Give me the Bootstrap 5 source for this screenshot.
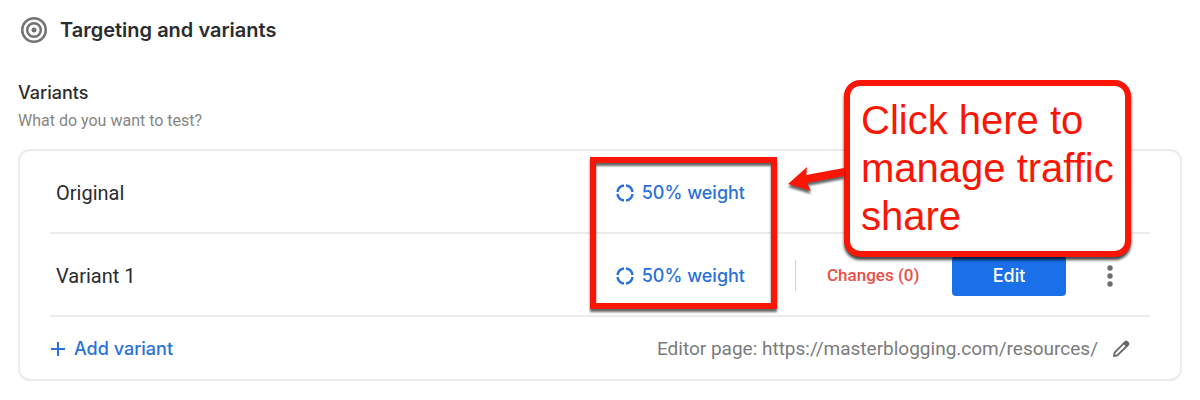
<!DOCTYPE html>
<html lang="en">
<head>
<meta charset="utf-8">
<meta name="viewport" content="width=device-width, initial-scale=1">
<title>Targeting and variants</title>
<link href="https://cdn.jsdelivr.net/npm/bootstrap@5.3.0/dist/css/bootstrap.min.css" rel="stylesheet">
<style>
  body { font-family: Roboto, "Liberation Sans", sans-serif; color: #2b2c2f; background: #fff; }
  .page { padding: 14px 18px 20px; }
  .product { font-family: Inter, "Open Sans", sans-serif; font-weight: 500; }
  .page-title { font-size: 20px; line-height: 32px; }
  .page-head { gap: 10px; }
  .section-title { font-size: 18px; line-height: 24px; margin-top: 35px; }
  .section-hint { font-size: 16px; line-height: 24px; color: #858585; padding: 4px 0 0; margin-bottom: 16px; }
  .variants { border: 2px solid #ebebeb; border-radius: 12px; padding: 0 30px; }
  .variant-row { height: 83px; border-bottom: 2px solid #ebebeb; padding: 2px 0 0 6px; font-size: 20px; }
  .link-btn { border: 0; padding: 0; background: none; color: #2a71d9; font-size: 18px; line-height: 24px; }
  .weight-cell { margin-right: 50px; }
  .row-actions { width: 355px; height: 40px; }
  .row-actions.divided::before { content: ""; width: 1px; height: 31px; background: #d4d4d4; margin-right: 31px; }
  .changes { color: #ea4f45; font-size: 17px; font-weight: 500; text-decoration: none; }
  .edit-btn { width: 114px; height: 40px; background: #1a70e8; color: #fff; font-size: 18px; border-radius: 4px; padding: 0; margin-left: auto; }
  .more-btn { width: 24px; height: 40px; margin-left: 32px; margin-right: 28px; }
  .variants-foot { height: 62px; padding-top: 2px; color: #7b7b7b; font-size: 19px; }
  .edit-page { margin: 0 20px 0 14px; }
  .mark-frame, .callout { position: absolute; border: 6px solid #fb1505; }
  .mark-frame { right: 403px; top: 6px; width: 187px; height: 152px; filter: drop-shadow(0 3px 1px #0009); pointer-events: none; }
  .callout { right: 49px; top: -71px; width: 287px; padding: 10px 0 11px 11px; border-radius: 16px; background: #fff; color: #fb1505; font: 40px/48px "Liberation Sans", Arial, sans-serif; box-shadow: 0 3px 3px #000b; }
  .callout-arrow { position: absolute; right: 100%; top: 74px; margin-right: 6px; filter: drop-shadow(0 3px 1px #0009); }
</style>
</head>
<body>
<main class="page">
  <header class="page-head d-flex align-items-center">
    <svg width="32" height="32" viewBox="0 0 32 32" fill="none" stroke="#737373" aria-hidden="true">
      <circle cx="16" cy="16" r="11.8" stroke-width="2.5"/>
      <circle cx="16" cy="16" r="6.8" stroke-width="2.5"/>
      <circle cx="16" cy="16" r="2.5" fill="#737373" stroke="none"/>
    </svg>
    <h1 class="product page-title mb-0 fw-semibold">Targeting and variants</h1>
  </header>

  <h2 class="product section-title mb-0">Variants</h2>
  <p class="section-hint">What do you want to test?</p>

  <section class="variants position-relative" aria-label="Variants">
    <div class="variant-row d-flex align-items-center">
      <span class="flex-grow-1">Original</span>
      <button type="button" class="link-btn product weight-cell d-flex align-items-center gap-2">
        <svg width="18" height="18" viewBox="0 0 18 18" fill="none" stroke="currentColor" stroke-width="2.4" aria-hidden="true"><path d="M10 1.5A7.6 7.6 0 0 1 16.5 8M16.5 10A7.6 7.6 0 0 1 10 16.5M8 16.5A7.6 7.6 0 0 1 1.5 10M1.5 8A7.6 7.6 0 0 1 8 1.5"/></svg>
        50% weight
      </button>
      <div class="row-actions"></div>
    </div>
    <div class="variant-row d-flex align-items-center">
      <span class="flex-grow-1">Variant 1</span>
      <button type="button" class="link-btn product weight-cell d-flex align-items-center gap-2">
        <svg width="18" height="18" viewBox="0 0 18 18" fill="none" stroke="currentColor" stroke-width="2.4" aria-hidden="true"><path d="M10 1.5A7.6 7.6 0 0 1 16.5 8M16.5 10A7.6 7.6 0 0 1 10 16.5M8 16.5A7.6 7.6 0 0 1 1.5 10M1.5 8A7.6 7.6 0 0 1 8 1.5"/></svg>
        50% weight
      </button>
      <div class="row-actions divided d-flex align-items-center">
        <a href="#changes" class="changes">Changes (0)</a>
        <button type="button" class="btn edit-btn product">Edit</button>
        <button type="button" class="link-btn more-btn d-flex align-items-center justify-content-center" aria-label="More options">
          <svg width="6" height="24" viewBox="0 0 6 24" fill="#6b6b6b" aria-hidden="true"><circle cx="3" cy="4" r="2.7"/><circle cx="3" cy="12" r="2.7"/><circle cx="3" cy="20" r="2.7"/></svg>
        </button>
      </div>
    </div>
    <div class="variants-foot d-flex align-items-center justify-content-between">
      <button type="button" class="link-btn product d-flex align-items-center gap-2">
        <svg width="16" height="16" viewBox="0 0 16 16" stroke="currentColor" stroke-width="2" aria-hidden="true"><path d="M8 1v14M1 8h14"/></svg>
        Add variant
      </button>
      <div class="d-flex align-items-center">
        <span>Editor page: https://masterblogging.com/resources/</span>
        <button type="button" class="link-btn edit-page d-flex" aria-label="Edit page address">
          <svg width="18" height="18" viewBox="0 0 18 18" fill="none" stroke="#686868" stroke-width="1.8" stroke-linejoin="round" aria-hidden="true"><path d="M2 16l.6-3.4L12.5 2.7l2.8 2.8L5.4 15.4z"/><path d="M12 3.2l1.4-1.4q.8-.6 1.6 0l1.2 1.2q.6.8 0 1.6L14.8 6z" fill="#686868"/></svg>
        </button>
      </div>
    </div>

    <div class="mark-frame"></div>
    <div class="callout">
      <svg class="callout-arrow" width="56" height="36" viewBox="0 0 56 36" fill="#fb1505" aria-hidden="true"><path d="M0 24L19 7l-1 8L56 8v8l-37 7 4 8z"/></svg>
      Click here to<br>manage traffic<br>share
    </div>
  </section>
</main>
<script src="https://cdn.jsdelivr.net/npm/bootstrap@5.3.0/dist/js/bootstrap.bundle.min.js"></script>
</body>
</html>
